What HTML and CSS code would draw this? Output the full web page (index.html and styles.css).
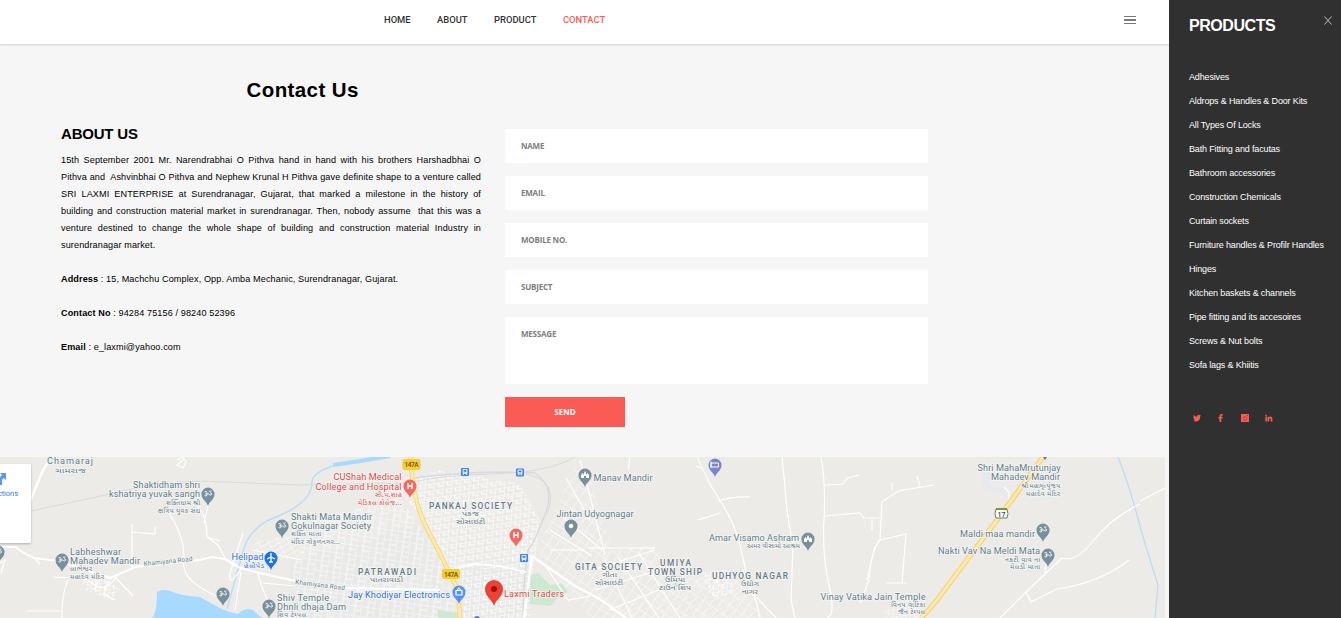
FILE: index.html
```html
<!DOCTYPE html>
<html lang="en">
<head>
<meta charset="utf-8">
<title>Contact Us</title>
<link rel="stylesheet" href="styles.css">
</head>
<body>
<div class="page">
<div class="main">
<header class="topbar">
<nav class="nav"><a>HOME</a><a>ABOUT</a><a>PRODUCT</a><a class="active">CONTACT</a></nav>
<svg class="burger" width="12" height="10" viewBox="0 0 12 10"><path d="M0 1.5h12M0 8.5h12" stroke="#777"/><path d="M0 5h12" stroke="#222" stroke-width="1.2"/></svg>
</header>
<main class="content">
<section class="about">
<h1>Contact Us</h1>
<h2>ABOUT US</h2>
<p>15th September 2001 Mr. Narendrabhai O Pithva hand in hand with his brothers Harshadbhai O Pithva and&nbsp; Ashvinbhai O Pithva and Nephew Krunal H Pithva gave definite shape to a venture called SRI LAXMI ENTERPRISE at Surendranagar, Gujarat, that marked a milestone in the history of building and construction material market in surendranagar. Then, nobody assume&nbsp; that this was a venture destined to change the whole shape of building and construction material Industry in surendranagar market.</p>
<p><b>Address</b> : 15, Machchu Complex, Opp. Amba Mechanic, Surendranagar, Gujarat.</p>
<p><b>Contact No</b> : 94284 75156 / 98240 52396</p>
<p><b>Email</b> : e_laxmi@yahoo.com</p>
</section>
<form class="form">
<input placeholder="NAME"><input placeholder="EMAIL"><input placeholder="MOBILE NO."><input placeholder="SUBJECT">
<textarea placeholder="MESSAGE"></textarea>
<button type="button">SEND</button>
</form>
</main>
<div class="map">
<svg width="1165" height="161" viewBox="0 457 1165 161">
<defs>
<pattern id="g1" width="9" height="7" patternUnits="userSpaceOnUse" patternTransform="rotate(-8) skewX(-12)"><path d="M0 0H9M0 0V7M4.500 0V3.500H9" fill="none" stroke="#fff" stroke-width="1"/></pattern>
<pattern id="g2" width="13" height="10" patternUnits="userSpaceOnUse" patternTransform="rotate(8)"><path d="M0 0H13M0 0V10M7 5H13M7 0V10" fill="none" stroke="#fff" stroke-width=".9"/></pattern>
<pattern id="g3" width="8" height="11" patternUnits="userSpaceOnUse" patternTransform="rotate(35)"><path d="M0 0H8M0 0V11" fill="none" stroke="#fff" stroke-width="1.1"/></pattern>
<pattern id="g4" width="9" height="5" patternUnits="userSpaceOnUse" patternTransform="rotate(-28)"><path d="M0 0H9M0 0V5" fill="none" stroke="#fff" stroke-width=".9"/></pattern>
<g id="drop"><path d="M0 12C-1.500 7-6.500 5.500-6.500 0A6.500 6.500 0 0 1 6.500 0C6.500 5.500 1.500 7 0 12Z"/></g>
<g id="om"><use href="#drop" fill="#78909c"/><path d="M-3.500-2.200q2.500-1 2.500 1q0 1-1.500 1q2 0 1.500 1.500q-.8 1.400-2.500.2M-1 0q2-.7 2.500.8q1.500 1 2-.7q0-1.600-1.400-1.300M1-3q1 1 2.500-.2" fill="none" stroke="#fff" stroke-width=".9"/></g>
<g id="hosp"><use href="#drop" fill="#f06a62"/><path d="M-2-3V3M2-3V3M-2 0H2" fill="none" stroke="#fff" stroke-width="1.400"/></g>
<g id="temple"><use href="#drop" fill="#78909c"/><path d="M-4 3V0L-2.500-2L-1 0V-2L0-4L1-2V0L2.500-2L4 0V3H1V1H-1V3Z" fill="#fff"/></g>
<g id="bus"><rect x="-4" y="-4" width="8" height="8" rx="1" fill="#3f83e8"/><path d="M-2-2.500H2V1.500H-2ZM-2 .3H2M-2 3L-1 1.500M2 3L1 1.500" fill="none" stroke="#fff" stroke-width=".9"/></g>
</defs>
<rect y="457" width="1165" height="161" fill="#ecebe8"/>
<path d="M290 560L370 540 420 520 445 565 458 618H290ZM465 560H530V618H462Z" fill="#e8e8e8" opacity=".6"/>
<path d="M396 487L440 470 520 484 540 520 533 572 450 567 420 515Z" fill="url(#g1)"/>
<path d="M313 520L400 498 440 555 455 600 458 618H300L292 570Z" fill="url(#g2)" opacity=".85"/>
<path d="M462 570L530 572 530 618H462Z" fill="url(#g1)"/>
<path d="M537 550L560 500 575 468 590 478 612 550 655 545 670 580 755 572 757 618H590Z" fill="url(#g3)" opacity=".75"/>
<path d="M660 580L740 572 755 618H610Z" fill="url(#g4)" opacity=".5"/>
<path d="M255 541L290 536 302 555 285 560 256 552Z" fill="url(#g4)"/>
<path d="M82 580L108 575 118 590 112 600 85 590Z" fill="url(#g1)"/>
<path d="M700 573L728 570 735 592 715 600Z" fill="url(#g1)"/>
<path d="M885 609L925 600 920 618H884Z" fill="url(#g1)" opacity=".7"/>
<path d="M983 474L990 472 990 486 1007 488 1006 495 982 487Z" fill="#e4eaef"/>
<path d="M530 575L538 573 550 585 562 584 568 592 557 599 550 606 530 604ZM438 610L458 613V618H438Z" fill="#cde9d1"/>
<circle cx="676" cy="585" r="2.500" fill="#cde9d1"/><circle cx="679" cy="577" r="1.500" fill="#cde9d1"/>
<path d="M152 618Q157 613 157 592Q164 588 173 592T200 597Q214 605 222 609T238 614Q247 606 254 611L262 618Z" fill="#a8daff"/>
<path d="M227 609L243 552Q249 527 276 517Q309 504 312 485Q310 473 333 466" fill="none" stroke="#b9def8" stroke-width="1.500"/>
<path d="M333 465Q355 462 390 456" stroke="#a8daff" stroke-width="4" fill="none"/>
<path d="M1118 457Q1128 482 1137 515T1158 585L1155 618" fill="none" stroke="#b9def8" stroke-width="1.300"/>
<g fill="none" stroke="#d9dade"><path d="M31 511L110 494Q155 482 200 481L300 485L410 483Q440 475 490 474T565 462L575 457"/><path d="M415 478Q470 470 535 473Q556 487 545 515T528 550Q523 583 523 618" stroke-width="1.500"/><path d="M525 474Q560 480 547 515"/></g>
<g fill="none" stroke="#fff" stroke-width="1.200">
<path d="M48 462Q41 472 31 500" stroke-width="2.400"/>
<path d="M0 547L15 547Q24 554 34 558L58 561L110 578L135 567L200 560L212 557L225 559L238 567L255 572L300 582L350 588L440 590" stroke-width="2.200"/>
<path d="M132 524V532L155 534V527M132 530V569M35 559L40 564M53 577L75 578Q85 577 95 585T118 575M68 580Q63 590 62 610M27 611H60M62 610V618M0 563L5 560 1 573M115 577L133 596M108 581L104 594 115 600M98 581L94 590M165 507Q185 535 184 560Q181 575 200 587T222 596M195 504Q207 514 207 537L218 545 225 558M207 537L220 541M208 505L204 523M243 533L230 573Q228 590 243 566M235 610L241 572M258 573Q260 585 270 605M263 583L295 586M252 550L302 560M177 460L183 457 186 462 183 468 177 465 184 459"/>
<path d="M448 570L475 564 500 566 526 572" stroke-width="1.800"/><path d="M532 556L575 586 600 599 626 618M532 556L524 618" stroke-width="2.500"/><path d="M545 565L568 600 590 596M550 550L580 550M550 530L592 556M560 515L602 550M566 478L590 520M580 460L591 500 605 555M588 548H655M592 570L655 550M595 590L665 568M610 610L670 585M605 560L632 618M618 557L659 618M638 552L680 618"/>
<path d="M697 457L711 486Q732 518 737 535T750 590L776 618M718 501Q734 496 750 497M698 520L720 513M696 466L703 469M782 457Q785 485 786 500T793 545L791 600 795 618M821 457Q826 485 824 520T829 585 827 618M825 485L843 484 847 478 859 475M825 516L860 513 864 518H880M872 519V530M880 540Q871 550 869 580L860 603M882 502L882 502 898 491 934 485M892 483V490M917 476L920 487M882 502L880 540 906 534 902 583M886 583H907M875 546L867 580M630 457L628 470M1140 504Q1110 519 1093 541T1062 558L1026 592 1000 618M1165 488L1140 501M1026 592L1031 602 1057 589Q1100 583 1129 560M1004 487L1009 492 1009 502M1045 573L1046 561M743 570L755 600M760 618L754 592"/>
</g>
<path d="M410 457L413 483Q416 510 433 540L448 570 458 590 460 618" fill="none" stroke="#f4d47c" stroke-width="4.500"/><path d="M410 457L413 483Q416 510 433 540L448 570 458 590 460 618" fill="none" stroke="#fee9a5" stroke-width="3"/>
<path d="M1043 457L1003 512 937 600Q930 609 921 618" fill="none" stroke="#f0cd70" stroke-width="5"/><path d="M1043 457L1003 512 937 600Q930 609 921 618" fill="none" stroke="#fee9a5" stroke-width="3.200"/>
<path d="M1043 457h4l-2 3Z" fill="#607d8b"/>
<g class="shield"><rect x="402.500" y="459" width="18" height="11" rx="2"/><text x="404.500" y="467" textLength="14">147A</text><rect x="442" y="569" width="18" height="10" rx="2"/><text x="444" y="576.500" textLength="14">147A</text></g>
<path d="M996 509H1007Q1009 514 1007 518H996Q994 514 996 509Z" fill="#fff" stroke="#687f6a"/><path d="M996 508H1007V510H996Z" fill="#689f38"/><text class="route" x="997.500" y="516.500">17</text>
<use href="#om" x="208" y="494"/><use href="#om" x="282" y="526"/><use href="#om" x="62" y="560"/><use href="#om" x="-2" y="552"/><use href="#om" x="223" y="594"/><use href="#om" x="269" y="606"/><use href="#om" x="1043" y="530"/><use href="#om" x="1048" y="555"/>
<use href="#temple" x="585" y="475"/><use href="#temple" x="808" y="539"/><use href="#hosp" x="410" y="486"/><use href="#hosp" x="516" y="535"/><use href="#drop" x="571" y="526" fill="#78909c"/><circle cx="571" cy="526" r="2.300" fill="#fff"/>
<use href="#bus" x="465" y="472"/><use href="#bus" x="520" y="472.500"/><use href="#bus" x="524" y="558"/><circle cx="477" cy="619" r="3" fill="#3f83e8"/>
<use href="#drop" x="715" y="465" fill="#7986cb"/><path d="M711 461.500V468M711 463H718.500V467H711Z" fill="none" stroke="#fff"/>
<use href="#drop" x="271" y="558" fill="#1a73e8"/><path d="M271 553V562M267 559L271 557 275 559M269 562H273" fill="none" stroke="#fff" stroke-width="1.300"/>
<use href="#drop" x="459" y="592" fill="#5490f5"/><path d="M456 590.500H462V595H456ZM457.500 590Q459 586 460.500 590" fill="none" stroke="#fff" stroke-width="1.200"/>
<path d="M494 606C492 599 485 597 485 589A9 9 0 0 1 503 589C503 597 496 599 494 606Z" fill="#ea4335"/><circle cx="494" cy="589" r="3" fill="#a50e0e"/>
<g class="labels">
<text x="47" y="464" textLength="46">Chamaraj</text><text class="gu" x="55" y="472.500" textLength="31" lengthAdjust="spacingAndGlyphs">ચામરાજ</text>
<text x="133" y="487.500" textLength="67">Shaktidham shri</text><text x="109" y="497" textLength="91">kshatriya yuvak sangh</text><text class="gu" x="166" y="504.500" textLength="34">શક્તિધામ શ્રી</text><text class="gu" x="158" y="512.500" textLength="42">ક્ષત્રિય યુવક સંઘ</text>
<text x="291" y="519.500" textLength="81">Shakti Mata Mandir</text><text x="291" y="529" textLength="80">Gokulnagar Society</text><text class="gu" x="291" y="536" textLength="30">શક્તિ માતા</text><text class="gu" x="291" y="543.500" textLength="49">મંદિર ગોકુળનગર...</text>
<text x="70" y="554.500" textLength="51">Labheshwar</text><text x="70" y="564" textLength="70">Mahadev Mandir</text><text class="gu" x="70" y="571" textLength="22">લાભેશ્વર</text><text class="gu" x="70" y="578.500" textLength="34">મહાદેવ મંદિર</text>
<text x="277" y="600.500" textLength="52">Shiv Temple</text><text x="277" y="610" textLength="69">Dhnli dhaja Dam</text><text class="gu" x="277" y="616.500" textLength="29">શિવ ટેમ્પલ</text>
<text class="small" x="144" y="566" textLength="49" transform="rotate(-6 144 566)">Khamiyana Road</text><text class="small" x="295" y="584" textLength="50" transform="rotate(7 295 584)">Khamiyana Road</text>
<g class="red"><text x="333.500" y="480" textLength="68">CUShah Medical</text><text x="315.500" y="489.500" textLength="86">College and Hospital</text><text class="gu" x="375" y="497" textLength="27">સી.પ.શાહ</text><text class="gu" x="358" y="504.500" textLength="44">મેડિકલ કોલેજ...</text></g>
<g class="blue"><text x="231.500" y="560" textLength="32">Helipad</text><text class="gu" x="244" y="567.500" textLength="20">હેલીપેડ</text><text x="348" y="598" textLength="102">Jay Khodiyar Electronics</text></g>
<text class="red" x="504" y="596.500" textLength="60">Laxmi Traders</text>
<g class="area"><text x="429" y="508.500" textLength="83">PANKAJ SOCIETY</text><text class="gu" x="462" y="516" textLength="17" lengthAdjust="spacingAndGlyphs">પંકજ</text><text class="gu" x="456" y="523.500" textLength="29" lengthAdjust="spacingAndGlyphs">સોસાઇટી</text><text x="358" y="575" textLength="58">PATRAWADI</text><text class="gu" x="370" y="582" textLength="33" lengthAdjust="spacingAndGlyphs">પાતરાવાડી</text><text x="575" y="569.500" textLength="67">GITA SOCIETY</text><text class="gu" x="602" y="577" textLength="15" lengthAdjust="spacingAndGlyphs">ગીતા</text><text class="gu" x="595" y="584.500" textLength="28" lengthAdjust="spacingAndGlyphs">સોસાઇટી</text><text x="660" y="566" textLength="31">UMIYA</text><text x="648" y="574.500" textLength="54">TOWN SHIP</text><text class="gu" x="665" y="582" textLength="20" lengthAdjust="spacingAndGlyphs">ઉમિયા</text><text class="gu" x="659" y="590" textLength="32" lengthAdjust="spacingAndGlyphs">ટાઉન શિપ</text><text x="712" y="579" textLength="76">UDHYOG NAGAR</text><text class="gu" x="741" y="586" textLength="18" lengthAdjust="spacingAndGlyphs">ઉદ્યોગ</text><text class="gu" x="742" y="594" textLength="16" lengthAdjust="spacingAndGlyphs">નાગર</text></g>
<text x="593.500" y="481" textLength="59">Manav Mandir</text><text x="556.500" y="516.500" textLength="77">Jintan Udyognagar</text><text x="709" y="540.500" textLength="90">Amar Visamo Ashram</text><text class="gu" x="747" y="548" textLength="53">અમર વીસામો આશ્રમ</text>
<text x="977.500" y="471" textLength="83">Shri MahaMrutunjay</text><text x="991" y="480" textLength="69">Mahadev Mandir</text><text class="gu" x="1021" y="487.500" textLength="39">શ્રી મહામૃત્યુંજય</text><text class="gu" x="1026" y="495.500" textLength="34">મહાદેવ મંદિર</text>
<text x="960" y="536.500" textLength="75">Maldi maa mandir</text><text x="938" y="553.500" textLength="102">Nakti Vav Na Meldi Mata</text><text class="gu" x="1005" y="561.500" textLength="35">નક્ટી વાવ ના</text><text class="gu" x="1010" y="569" textLength="30">મેલડી માતા</text>
<text x="820.500" y="599.500" textLength="105">Vinay Vatika Jain Temple</text><text class="gu" x="891" y="606.500" textLength="34">વિનય વાટિકા</text><text class="gu" x="898" y="614" textLength="27">જૈન ટેમ્પલ</text>
</g>
<rect class="card" x="-10" y="464" width="41" height="79" rx="1"/>
<path d="M0 473H6V480L3.800 478 2 480V485H-1V479Q-1 478 2 475Z" fill="#5c97ec"/><text class="directions" x="-15" y="496" textLength="33">Directions</text>
</svg>
</div>
</div>
<aside class="side">
<div class="sidehead"><h3>PRODUCTS</h3><svg width="8" height="9" viewBox="0 0 8 9"><path d="M.5.500L7.500 8.500M7.500.500L.5 8.500" stroke="#bbb"/></svg></div>
<ul><li>Adhesives</li><li>Aldrops &amp; Handles &amp; Door Kits</li><li>All Types Of Locks</li><li>Bath Fitting and facutas</li><li>Bathroom accessories</li><li>Construction Chemicals</li><li>Curtain sockets</li><li>Furniture handles &amp; Profilr Handles</li><li>Hinges</li><li>Kitchen baskets &amp; channels</li><li>Pipe fitting and its accesoires</li><li>Screws &amp; Nut bolts</li><li>Sofa lags &amp; Khiitis</li></ul>
<div class="social">
<svg viewBox="0 0 8 8"><path d="M8 1.500L7.200 2.500Q7 7.500 2.500 7.500Q1 7.500 0 6.700Q1.500 6.700 2.200 6Q1 5.800.7 4.800H1.300Q.2 4.200.2 3H1Q0 2 .6 1Q2 2.700 4 2.700Q4 .8 5.600.8Q6.300.8 6.800 1.300L7.800.9L7.300 1.700Z"/></svg>
<svg viewBox="0 0 8 8"><path d="M2.500 8V4.500H1.500V3H2.500Q2.300.1 4.500 .1H5.800V1.600H5Q4.300 1.600 4.300 3H5.700L5.500 4.500H4.300V8Z"/></svg>
<svg viewBox="0 0 8 8"><rect width="8" height="8"/><circle cx="4" cy="4.500" r="1.800" fill="none" stroke="#9a403c" stroke-width=".8"/><path d="M5.700 1H7V2.300H5.700Z" fill="#9a403c"/></svg>
<svg viewBox="0 0 8 8"><path d="M.3.800H1.900V2.200H.3ZM.3 2.800H1.900V7.500H.3ZM2.500 2.800H4.100V3.400Q4.700 2.600 5.500 2.600Q7.400 2.600 7.400 4.800V7.500H5.700V5Q5.700 4.200 5 4.200T4.200 5V7.500H2.500Z"/></svg>
</div>
</aside>
</div>
</body>
</html>
```
FILE: styles.css
```css
* { box-sizing: border-box; }
body { margin: 0; background: #f6f6f6; font-family: "Liberation Sans", Arial, sans-serif; color: #000; overflow: hidden; }
.page { display: flex; width: 1341px; height: 618px; }
.main { display: flex; flex-direction: column; width: 1169px; }
.topbar { display: flex; justify-content: space-between; height: 44px; padding: 14px 33px 0 384px; background: #fff; box-shadow: 0 1px 2px rgba(0,0,0,.15); }
.nav { display: flex; gap: 26.5px; font: 500 9.4px/12px Roboto, sans-serif; color: #333; }
.nav .active { color: #fa5b52; }
.burger { margin-top: 1px; }
.content { display: flex; gap: 24px; height: 413px; padding-left: 61px; }
.about { width: 420px; }
h1 { margin: 32px 0 0 185.5px; font-size: 20.5px; line-height: 28px; letter-spacing: .4px; }
h2 { margin: 20px 0 8px; font-size: 15px; line-height: 20px; letter-spacing: -.2px; }
.about p { margin: 0 0 17px; font-size: 9.1px; line-height: 17px; letter-spacing: .11px; text-align: justify; }
.form { display: flex; flex-direction: column; align-items: flex-start; gap: 13px; width: 423px; padding-top: 85px; }
.form input, .form textarea { width: 423px; height: 34px; margin: 0; padding: 0 16px 1px; border: 0; border-radius: 0; background: #fff; font: 700 8px/12px "Open Sans", sans-serif; letter-spacing: -.2px; resize: none; outline: 0; }
.form textarea { height: 67px; padding-top: 11px; }
.form ::placeholder { color: #808080; opacity: 1; }
.form button { width: 120px; height: 30px; padding: 0; border: 0; background: #fa5b55; color: #fff; font: 700 8px/12px "Open Sans", sans-serif; }
.map { height: 161px; }
.map svg { display: block; }
.labels { font: 9.2px Roboto, sans-serif; fill: #607d8b; paint-order: stroke; stroke: #f7f6f5; stroke-width: 1.4px; }
.labels .gu { font-size: 7px; font-family: "Noto Sans Gujarati", "Noto Sans", sans-serif; font-weight: 400; }
.labels .small { font-size: 6.5px; }
.labels .red { fill: #d94a44; }
.labels .blue { fill: #2a72e0; }
.labels .area { font-size: 8.3px; font-weight: 500; fill: #647985; }
.shield { fill: #facc31; font: 500 6.5px Roboto, sans-serif; }
.shield text { fill: #66500d; }
.route { fill: #444; font: 500 7px Roboto, sans-serif; }
.card { fill: #fff; filter: drop-shadow(0 1px 1px rgba(0,0,0,.25)); }
.directions { font: 7.5px Roboto, sans-serif; fill: #3b78e7; }
.side { width: 172px; padding: 15px 9px 0 20px; background: #303030; color: #fff; }
.sidehead { display: flex; justify-content: space-between; height: 50px; }
h3 { margin: 0; font-size: 16px; line-height: 21px; letter-spacing: -.45px; }
.sidehead svg { margin: 1px 0 0; }
.side ul { margin: 0; padding: 0; list-style: none; }
.side li { font-size: 9px; line-height: 24px; letter-spacing: -.15px; white-space: nowrap; }
.social { display: flex; gap: 16px; padding: 37px 0 0 4px; }
.social svg { width: 8px; height: 8px; fill: #fa5b52; }
```
